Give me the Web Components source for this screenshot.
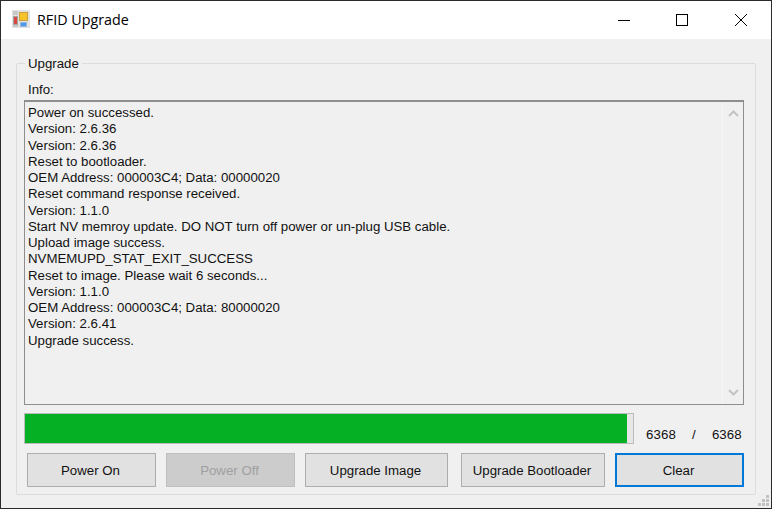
<!DOCTYPE html>
<html>
<head>
<meta charset="utf-8">
<style>
html, body { margin: 0; padding: 0; background: #f0f0f0; }
body { font: 13.25px "Liberation Sans", Arial, sans-serif; color: #111; }
.info { line-height: 17px; height: 17px; margin: 0 0 2px 4px; }
.far { margin-left: 3px; }
</style>
</head>
<body>
<rfid-window>
  <title-bar slot="title" caption="RFID Upgrade"></title-bar>
  <group-box caption="Upgrade">
    <div class="info">Info:</div>
    <log-box>Power on successed.
Version: 2.6.36
Version: 2.6.36
Reset to bootloader.
OEM Address: 000003C4; Data: 00000020
Reset command response received.
Version: 1.1.0
Start NV memroy update. DO NOT turn off power or un-plug USB cable.
Upload image success.
NVMEMUPD_STAT_EXIT_SUCCESS
Reset to image. Please wait 6 seconds...
Version: 1.1.0
OEM Address: 000003C4; Data: 80000020
Version: 2.6.41
Upgrade success.</log-box>
    <progress-row value="6368" max="6368"></progress-row>
    <button-row>
      <win-button style="width:129px">Power On</win-button>
      <win-button style="width:129px" disabled>Power Off</win-button>
      <win-button style="width:143px">Upgrade Image</win-button>
      <win-button style="width:144px" class="far">Upgrade Bootloader</win-button>
      <win-button style="width:129px" focused>Clear</win-button>
    </button-row>
  </group-box>
</rfid-window>

<script>
//outer window frame
class RfidWindow extends HTMLElement {
    constructor(){
        super();
        this.attachShadow({mode:"open"}).innerHTML = `
<style>
:host { display: flex; flex-direction: column; box-sizing: border-box; width: 772px; height: 509px; border: 1px solid #2b2b2b; background: #f0f0f0; position: relative; overflow: hidden; }
.body { flex: 1; padding: 24px 15px 13px 15px; display: flex; flex-direction: column; }
.grip { position: absolute; right: 2px; bottom: 2px; }
</style>
<slot name="title"></slot>
<div class="body"><slot></slot></div>
<svg class="grip" width="11" height="11" viewBox="0 0 11 11" fill="#c2c2c2">
  <rect x="8" y="0" width="3" height="3"/><rect x="4" y="4" width="3" height="3"/><rect x="8" y="4" width="3" height="3"/>
  <rect x="0" y="8" width="3" height="3"/><rect x="4" y="8" width="3" height="3"/><rect x="8" y="8" width="3" height="3"/>
</svg>`;
    }
}

class TitleBar extends HTMLElement {
    constructor(){
        super();
        this.attachShadow({mode:"open"}).innerHTML = `
<style>
:host { display: flex; align-items: center; height: 38px; background: #fff; color: #000; flex: none; padding-right: 1px; }
.icon { margin: 0 0 2px 11px; width: 18px; height: 18px; flex: none; }
.cap { margin: 0 0 2px 7px; font: 14.3px "Open Sans", sans-serif; flex: 1; }
.ctl { width: 58px; height: 38px; display: flex; align-items: center; justify-content: center; flex: none; }
.ctl.close { margin-left: 1px; }
svg { display: block; }
</style>
<svg class="icon" viewBox="0 0 18 18">
  <rect width="18" height="18" fill="#e2e2e2"/>
  <rect x="1" y="1" width="5" height="4" fill="#c8c8c8"/>
  <rect x="1" y="15" width="5" height="2" fill="#c8c8c8"/>
  <rect x="1.500" y="6.500" width="4" height="8" fill="#d8483f" stroke="#a5a5a5"/>
  <rect x="7.500" y="2.500" width="8" height="8" fill="#f6c42a" stroke="#c9a040"/>
  <rect x="8.500" y="12.500" width="6" height="4" fill="#4d96e8" stroke="#9ab8da"/>
</svg>
<div class="cap"></div>
<div class="ctl"><svg width="12" height="1"><rect width="12" height="1" fill="#000"/></svg></div>
<div class="ctl"><svg width="12" height="12"><rect x="0.5" y="0.5" width="11" height="11" fill="none" stroke="#000"/></svg></div>
<div class="ctl close"><svg width="12" height="12"><path d="M0 0L12 12M12 0L0 12" stroke="#000" fill="none"/></svg></div>`;
    }
    connectedCallback(){
        this.shadowRoot.querySelector(".cap").textContent = this.getAttribute("caption");
    }
}

class GroupBox extends HTMLElement {
    constructor(){
        super();
        this.attachShadow({mode:"open"}).innerHTML = `
<style>
:host { display: flex; flex-direction: column; flex: 1; box-sizing: border-box; border: 1px solid #dcdcdc; border-radius: 2px; padding: 17px 11px 7px 7px; position: relative; }
.legend { position: absolute; top: -9px; left: 8px; padding: 0 3px; background: #f0f0f0; line-height: 17px; }
</style>
<div class="legend"></div>
<slot></slot>`;
    }
    connectedCallback(){
        this.shadowRoot.querySelector(".legend").textContent = this.getAttribute("caption");
    }
}

class LogBox extends HTMLElement {
    constructor(){
        super();
        this.attachShadow({mode:"open"}).innerHTML = `
<style>
:host { display: flex; height: 305px; box-sizing: border-box; border: 1px solid #8e8e8e; border-top-width: 2px; flex: none; }
.text { flex: 1; white-space: pre; padding: 3px 0 0 3px; line-height: 16.25px; }
.bar { width: 21px; border-left: 1px solid #f7f7f7; display: flex; flex-direction: column; justify-content: space-between; align-items: center; padding: 8px 0; box-sizing: border-box; }
</style>
<div class="text"><slot></slot></div>
<div class="bar">
  <svg width="11" height="7" viewBox="0 0 11 7"><path d="M1 6L5.500 1.500L10 6" fill="none" stroke="#c4c4c4" stroke-width="2"/></svg>
  <svg width="11" height="7" viewBox="0 0 11 7"><path d="M1 1L5.500 5.500L10 1" fill="none" stroke="#c4c4c4" stroke-width="2"/></svg>
</div>`;
    }
}

class ProgressRow extends HTMLElement {
    constructor(){
        super();
        this.attachShadow({mode:"open"}).innerHTML = `
<style>
:host { display: flex; align-items: flex-end; margin-top: 8px; height: 31px; flex: none; }
.track { width: 610px; height: 31px; box-sizing: border-box; border: 1px solid #bcbcbc; background: #e6e6e6; flex: none; }
.fill { height: 100%; background: #06b025; width: 99%; }
.nums { display: flex; margin-left: 12px; line-height: 17px; margin-bottom: 1px; letter-spacing: 0.1px; }
.sep { width: 36px; text-align: center; }
</style>
<div class="track"><div class="fill"></div></div>
<div class="nums"><span class="v"></span><span class="sep">/</span><span class="m"></span></div>`;
    }
    connectedCallback(){
        this.shadowRoot.querySelector(".v").textContent = this.getAttribute("value");
        this.shadowRoot.querySelector(".m").textContent = this.getAttribute("max");
    }
}

class ButtonRow extends HTMLElement {
    constructor(){
        super();
        this.attachShadow({mode:"open"}).innerHTML = `
<style>
:host { display: flex; gap: 10px; margin: 9px 0 0 3px; flex: none; }
</style>
<slot></slot>`;
    }
}

class WinButton extends HTMLElement {
    constructor(){
        super();
        this.attachShadow({mode:"open"}).innerHTML = `
<style>
:host { display: flex; align-items: center; justify-content: center; box-sizing: border-box; height: 34px; padding-right: 2px; border: 1px solid #adadad; background: #e1e1e1; flex: none; }
:host([disabled]) { background: #cccccc; border-color: #bfbfbf; color: #a0a0a0; }
:host([focused]) { border: 2px solid #0078d7; }
</style>
<slot></slot>`;
    }
}

customElements.define("rfid-window", RfidWindow);
customElements.define("title-bar", TitleBar);
customElements.define("group-box", GroupBox);
customElements.define("log-box", LogBox);
customElements.define("progress-row", ProgressRow);
customElements.define("button-row", ButtonRow);
customElements.define("win-button", WinButton);
</script>
</body>
</html>
